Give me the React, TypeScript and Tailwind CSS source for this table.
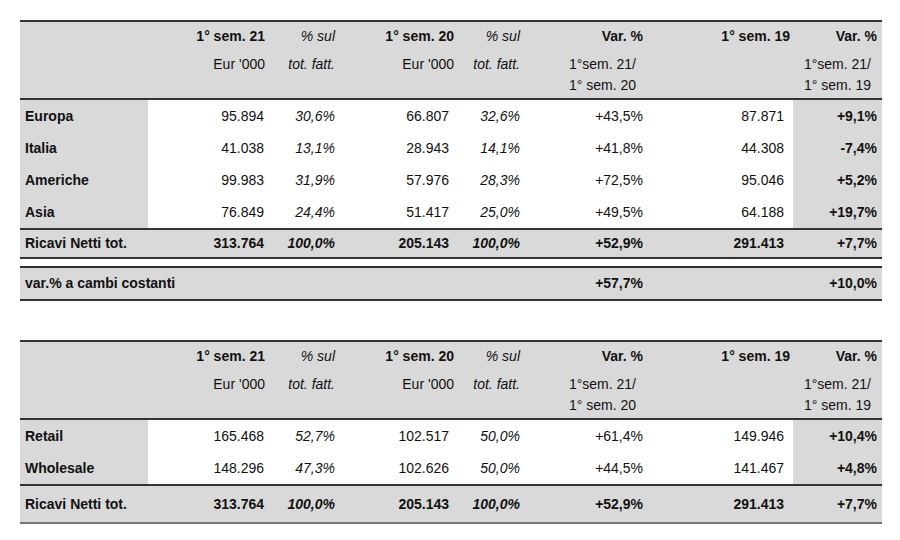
const cols = "grid grid-cols-[128px_124px_68px_118px_67px_123px_145px_89px]";

function Header() {
  return (
    <div className={`${cols} h-[80px] border-y-2 border-[#333] bg-[#d9d9d9] pt-[4px]`}>
      <div />
      <div className="flex flex-col items-end pr-[7px]">
        <span className="font-bold leading-[21px]">1° sem. 21</span>
        <span className="mt-[7px] leading-[21px]">Eur '000</span>
      </div>
      <div className="flex flex-col items-end pr-[5px] italic">
        <span className="leading-[21px]">% sul</span>
        <span className="mt-[7px] leading-[21px]">tot. fatt.</span>
      </div>
      <div className="flex flex-col items-end pr-[4px]">
        <span className="font-bold leading-[21px]">1° sem. 20</span>
        <span className="mt-[7px] leading-[21px]">Eur '000</span>
      </div>
      <div className="flex flex-col items-end pr-[5px] italic">
        <span className="leading-[21px]">% sul</span>
        <span className="mt-[7px] leading-[21px]">tot. fatt.</span>
      </div>
      <div className="flex flex-col items-end pr-[5px]">
        <span className="font-bold leading-[21px]">Var. %</span>
        <div className="mt-[7px] flex flex-col items-start pr-[7px] leading-[21px]">
          <span>1°sem. 21/</span>
          <span>1° sem. 20</span>
        </div>
      </div>
      <div className="flex flex-col items-end pr-[3px]">
        <span className="font-bold leading-[21px]">1° sem. 19</span>
      </div>
      <div className="flex flex-col items-end pr-[5px]">
        <span className="font-bold leading-[21px]">Var. %</span>
        <div className="mt-[7px] flex flex-col items-start pr-[6px] leading-[21px]">
          <span>1°sem. 21/</span>
          <span>1° sem. 19</span>
        </div>
      </div>
    </div>
  );
}

type Row = [string, string, string, string, string, string, string, string];

function BodyRow({ r }: { r: Row }) {
  return (
    <div className={`${cols} h-[32px] items-stretch`}>
      <div className="flex items-center bg-[#d9d9d9] pl-[5px] pt-[1px] font-bold">{r[0]}</div>
      <div className="flex items-center justify-end pr-[8px] pt-[1px]">{r[1]}</div>
      <div className="flex items-center justify-end pr-[5px] pt-[1px] italic">{r[2]}</div>
      <div className="flex items-center justify-end pr-[9px] pt-[1px]">{r[3]}</div>
      <div className="flex items-center justify-end pr-[5px] pt-[1px] italic">{r[4]}</div>
      <div className="flex items-center justify-end pr-[5px] pt-[1px]">{r[5]}</div>
      <div className="flex items-center justify-end pr-[9px] pt-[1px]">{r[6]}</div>
      <div className="flex items-center justify-end bg-[#d9d9d9] pr-[5px] pt-[1px] font-bold">{r[7]}</div>
    </div>
  );
}

function TotalRow({ r, h, bottom }: { r: Row; h: string; bottom: string }) {
  return (
    <div className={`${cols} ${h} items-center whitespace-nowrap border-y-2 border-t-[#333] ${bottom} bg-[#d9d9d9] font-bold`}>
      <div className="pl-[5px]">{r[0]}</div>
      <div className="text-right pr-[8px]">{r[1]}</div>
      <div className="text-right pr-[5px] italic">{r[2]}</div>
      <div className="text-right pr-[9px]">{r[3]}</div>
      <div className="text-right pr-[5px] italic">{r[4]}</div>
      <div className="text-right pr-[5px]">{r[5]}</div>
      <div className="text-right pr-[9px]">{r[6]}</div>
      <div className="text-right pr-[5px]">{r[7]}</div>
    </div>
  );
}

const areas: Row[] = [
  ["Europa", "95.894", "30,6%", "66.807", "32,6%", "+43,5%", "87.871", "+9,1%"],
  ["Italia", "41.038", "13,1%", "28.943", "14,1%", "+41,8%", "44.308", "-7,4%"],
  ["Americhe", "99.983", "31,9%", "57.976", "28,3%", "+72,5%", "95.046", "+5,2%"],
  ["Asia", "76.849", "24,4%", "51.417", "25,0%", "+49,5%", "64.188", "+19,7%"],
];

const channels: Row[] = [
  ["Retail", "165.468", "52,7%", "102.517", "50,0%", "+61,4%", "149.946", "+10,4%"],
  ["Wholesale", "148.296", "47,3%", "102.626", "50,0%", "+44,5%", "141.467", "+4,8%"],
];

const total: Row = ["Ricavi Netti tot.", "313.764", "100,0%", "205.143", "100,0%", "+52,9%", "291.413", "+7,7%"];
const constant: Row = ["var.% a cambi costanti", "", "", "", "", "+57,7%", "", "+10,0%"];

export default function App() {
  return (
    <div className="h-[540px] w-[900px] bg-white pl-[20px] pt-[20px] font-['Liberation_Sans',Arial,sans-serif] text-[14px] text-[#111]">
      <div className="w-[862px]">
        <Header />
        {areas.map((r) => (
          <BodyRow key={r[0]} r={r} />
        ))}
        <TotalRow r={total} h="h-[31px]" bottom="border-b-[#333]" />
        <div className="mt-[7px]">
          <TotalRow r={constant} h="h-[35px]" bottom="border-b-[#333]" />
        </div>
      </div>

      <div className="mt-[39px] w-[862px]">
        <Header />
        {channels.map((r) => (
          <BodyRow key={r[0]} r={r} />
        ))}
        <TotalRow r={total} h="h-[40px]" bottom="border-b-[#777]" />
      </div>
    </div>
  );
}
